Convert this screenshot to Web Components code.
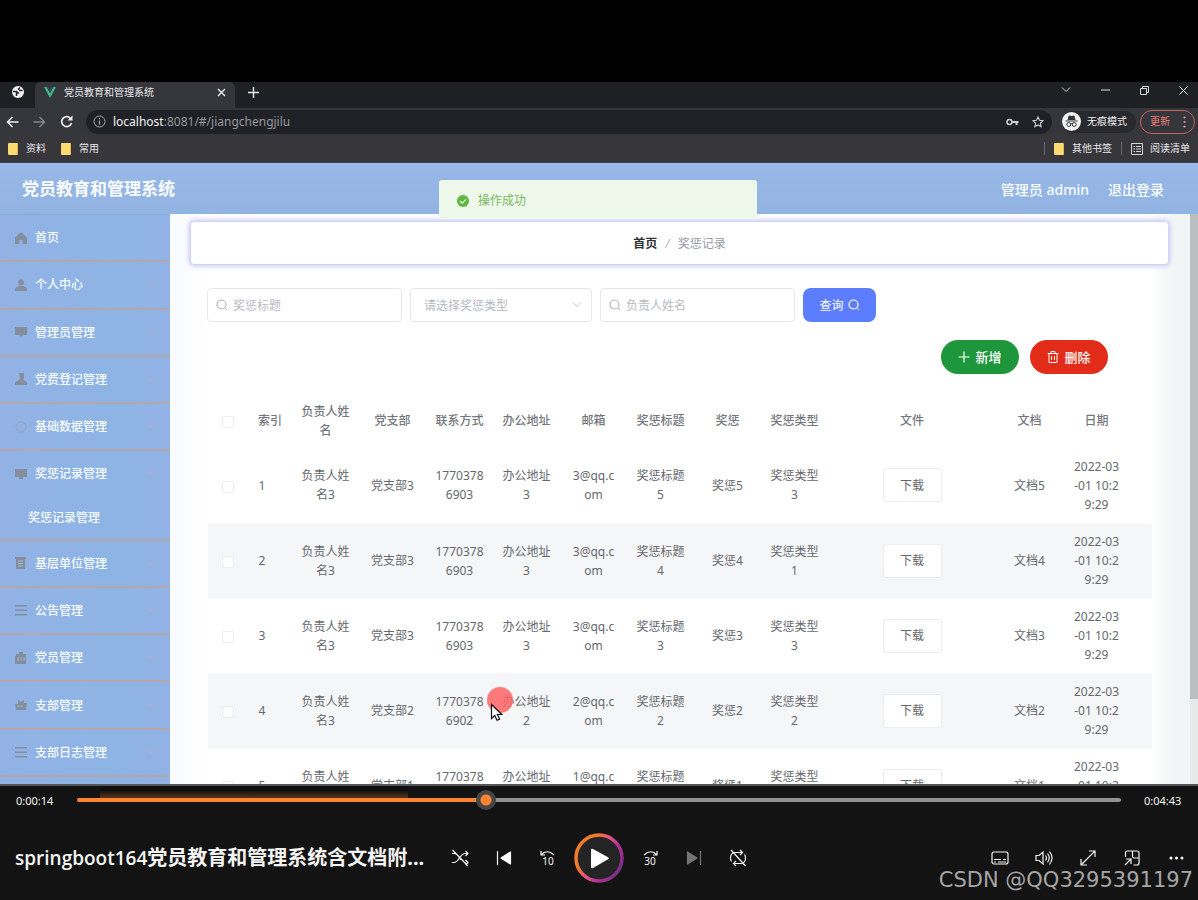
<!DOCTYPE html>
<html lang="zh-CN">
<head>
<meta charset="utf-8">
<title>党员教育和管理系统</title>
<style>
html,body{margin:0;height:100%}
body{background:#000;font:12px/19px "Noto Sans","Noto Sans CJK SC",sans-serif;color:#606266}
</style>
</head>
<body>
<media-stage></media-stage>
<script>
const define = (name, html, init) => customElements.define(name, class extends HTMLElement {
  constructor() {
    super();
    const t = document.createElement('template');
    t.innerHTML = '<style>*{box-sizing:border-box}svg{display:block;flex:none}button{font:inherit;border:0;background:none;padding:0;color:inherit}a{color:inherit;text-decoration:none}</style>' + html;
    this.attachShadow({mode: 'open'}).append(t.content.cloneNode(true));
  }
  connectedCallback() { if (init) init.call(this, this.shadowRoot); }
});

/* ---------- browser chrome ---------- */
define('tab-strip', `<style>
:host{display:flex;height:26px;background:#1e2024;color:#e8e8ea;font-size:10px;line-height:20px;align-items:stretch}
.pin{width:35px;display:flex;align-items:center;justify-content:center;padding-bottom:6px}
.tab{width:200px;background:#35363b;border-radius:6px 6px 0 0;display:flex;align-items:center;padding:0 9px 6px 9px;gap:8px}
.tab span{flex:1}
.plus{width:36px;display:flex;justify-content:center;align-items:center;padding-bottom:6px}
.win{margin-left:auto;display:flex;align-items:center;padding:0 2px 10px 0}
.win button{width:26px;display:flex;justify-content:center;margin-left:13px}
</style>
<div class="pin"><svg width="12" height="12" viewBox="0 0 12 12"><circle cx="6" cy="6" r="6" fill="#f2f2f2"/><path d="M1 5.500h3.500l1.500 1.500h-1.500v3M10.500 4.500H8L6.500 3 8 1.500" stroke="#24262a" stroke-width="1.500" fill="none"/></svg></div>
<div class="tab"><svg width="12" height="11" viewBox="0 0 12 11"><path d="M0 0h2.600L6 6 9.400 0H12L6 11z" fill="#41b883"/><path d="M2.600 0h2L6 2.500 7.400 0h2L6 6z" fill="#34495e"/></svg><span>党员教育和管理系统</span>
<button aria-label="关闭标签页"><svg width="9" height="9" viewBox="0 0 9 9"><path d="M1 1l7 7M8 1L1 8" stroke="#f2f2f2" stroke-width="1.400"/></svg></button></div>
<button class="plus" aria-label="新标签页"><svg width="11" height="11" viewBox="0 0 11 11"><path d="M5.500 0v11M0 5.500h11" stroke="#e8e8e8" stroke-width="1.400"/></svg></button>
<div class="win">
<button aria-label="搜索标签页"><svg width="10" height="6" viewBox="0 0 10 6"><path d="M1 .5l4 4 4-4" stroke="#ccc" fill="none"/></svg></button>
<button aria-label="最小化"><svg width="9" height="2"><path d="M0 1h9" stroke="#ddd"/></svg></button>
<button aria-label="还原"><svg width="9" height="9" viewBox="0 0 9 9"><path d="M.5 2.500h6v6h-6zM2.500 2.500v-2h6v6h-2" stroke="#ddd" fill="none"/></svg></button>
<button aria-label="关闭"><svg width="9" height="9" viewBox="0 0 9 9"><path d="M.5.5l8 8M8.500.5l-8 8" stroke="#eee"/></svg></button>
</div>`);

define('address-bar', `<style>
:host{display:flex;height:27px;background:#35363b;align-items:center;padding:0 3px 0 6px;color:#eee}
.nav{display:flex;gap:14px;width:80px;flex:none}
.url{flex:1;height:24px;border-radius:12px;background:#1f2126;display:flex;align-items:center;padding:0 8px 0 7px;gap:7px;margin-right:10px}
.host{color:#f2f2f2}
.path{color:#97989c}
.url a{flex:1}
.key{margin-right:6px}
.chip{display:flex;align-items:center;gap:6px;font-size:10px;background:#28292d;border-radius:12px;height:22px;padding-right:9px}
.update{margin-left:4px;height:24px;border:1px solid #c5655f;border-radius:12px;color:#ee8078;font-size:10px;width:55px;display:flex;align-items:center;justify-content:space-between;padding:0 8px 0 9px}
</style>
<div class="nav">
<button aria-label="后退"><svg width="13" height="12" viewBox="0 0 13 12"><path d="M12.500 6H1.500M6.500 1L1.500 6l5 5" stroke="#f0f0f0" stroke-width="1.500" fill="none"/></svg></button>
<button aria-label="前进"><svg width="13" height="12" viewBox="0 0 13 12"><path d="M.5 6h11M6.500 1l5 5-5 5" stroke="#85868a" stroke-width="1.500" fill="none"/></svg></button>
<button aria-label="刷新"><svg width="13" height="13" viewBox="0 0 13 13"><path d="M11 4A5 5 0 1 0 11.500 8" stroke="#f0f0f0" stroke-width="1.700" fill="none"/><path d="M12.500.5v5h-5z" fill="#f0f0f0"/></svg></button></div>
<div class="url"><svg width="13" height="13" viewBox="0 0 13 13"><circle cx="6.500" cy="6.500" r="5.500" stroke="#aaa" fill="none"/><path d="M6.500 5.500v4M6.500 3v1.300" stroke="#aaa" stroke-width="1.200"/></svg>
<a href="#/jiangchengjilu"><span class="host">localhost</span><span class="path">:8081/#/jiangchengjilu</span></a>
<svg class="key" width="13" height="8" viewBox="0 0 13 8"><circle cx="3.500" cy="4" r="2.500" stroke="#d0d0d0" stroke-width="1.500" fill="none"/><path d="M6 4h6.500M10.500 4v3" stroke="#d0d0d0" stroke-width="2"/></svg>
<svg width="12" height="12" viewBox="0 0 12 12"><path d="M6 1l1.500 3.300 3.500.4-2.600 2.400.7 3.500L6 8.900l-3.100 1.700.7-3.500L1 4.700l3.500-.4z" stroke="#d0d0d0" fill="none" stroke-width="1.100"/></svg></div>
<div class="chip"><svg width="19" height="19" viewBox="0 0 19 19"><circle cx="9.500" cy="9.500" r="9.500" fill="#f3f3f3"/><path d="M6.500 4l1-.5 2 .5 2-.5 1 .5 1 4h-8zM3.500 8.500h12v1h-12z" fill="#33353a"/><circle cx="6.800" cy="12.500" r="2" fill="none" stroke="#33353a"/><circle cx="12.200" cy="12.500" r="2" fill="none" stroke="#33353a"/><path d="M8.500 12q1-.8 2 0" stroke="#33353a" fill="none"/></svg>无痕模式</div>
<button class="update">更新<svg width="3" height="12" viewBox="0 0 3 12" fill="#d99"><circle cx="1.500" cy="1.500" r="1.100"/><circle cx="1.500" cy="6" r="1.100"/><circle cx="1.500" cy="10.500" r="1.100"/></svg></button>`);

define('bookmarks-bar', `<style>
:host{display:flex;height:28px;background:#36363b;color:#e6e6e8;font-size:10px;align-items:center;padding:0 8px;border-bottom:1px solid #3c4252}
a{display:flex;align-items:center;gap:8px;margin-right:15px}
i{width:10px;height:12px;background:#fbdc72;border-radius:1px;border-right:1px solid #e5b94c}
b{width:1px;height:13px;background:#67686c;margin-right:9px}
.right{margin-left:auto;display:flex;align-items:center}
.right a{margin-right:9px}.right a:last-child{margin-right:0;gap:7px}
</style>
<a href="#z"><i></i>资料</a><a href="#c"><i></i>常用</a>
<div class="right"><b></b><a href="#q"><i></i>其他书签</a><b></b><a href="#y"><svg width="12" height="12" viewBox="0 0 12 12"><path d="M.5.5h11v11H.5zM5 3.500h5M5 6h5M5 8.500h5M2.500 3.500h1.500M2.500 6h1.500M2.500 8.500h1.500" stroke="#d5d5d5" fill="none"/></svg>阅读清单</a></div>`);

/* ---------- admin application ---------- */
define('app-header', `<style>
:host{display:flex;height:51px;flex:none;background:linear-gradient(#98b8e6,#92b4e3);color:#f8fcff;align-items:center;justify-content:space-between;padding:1px 34px 0 22px}
h1{margin:0;font-size:17px;line-height:24px;font-weight:700}
div{display:flex;gap:19px;font-size:14px;font-weight:500}
</style><h1>党员教育和管理系统</h1><div><span>管理员 admin</span><a href="#/login">退出登录</a></div>`);

const navIcons = {
  home:'<path d="M6 0L0 5.500V12h4.500V8h3v4H12V5.500z"/>',
  user:'<circle cx="6" cy="3.500" r="3"/><path d="M0 12V9.500Q1 7.500 4 7h4q3 .5 4 2.500V12z"/>',
  chat:'<path d="M0 1h12v8H8l-2 2-1-2H0z"/>',
  person:'<path d="M4 0h5v5L8 7l4 2v3H0V9l4-2 1-2z"/>',
  dial:'<circle cx="6" cy="6" r="5" fill="none" stroke="#9298a5" stroke-dasharray="4 1" opacity=".6"/><path d="M6 3v4" stroke="#9298a5" opacity=".5"/>',
  screen:'<path d="M0 1h12v8H8v2H4V9H0z"/>',
  doc:'<path d="M0 0h11v2h-1v10H1V2H0z"/><path d="M3 4h5M3 6.500h5M3 9h5" stroke="#a9bdd8"/>',
  list:'<path d="M0 1h12v1.500H0zM0 5.500h12V7H0zM0 10h12v1.500H0z"/>',
  grid:'<path d="M1 2h3V0h4v2h3v10H0V4h1z"/><path d="M3 5v4M6 5v4M9 5v4" stroke="#9bb2d4"/>',
  bag:'<path d="M3 1l3 2 3-2v3h3l-1 7H1L0 5h3z"/><path d="M2 7h6" stroke="#9bb2d4"/>'
};
define('nav-item', `<style>
:host{display:flex;flex-direction:column;flex:1 0 auto;min-height:47px;border-bottom:2px solid #b5a8ab;color:#f5fbff;font-weight:500}
a{display:flex;align-items:center;height:45px;flex:1 0 auto;padding:0 15px;gap:8px}
.text{flex:1}
</style>
<a href="#"><svg class="icon" width="12" height="12" viewBox="0 0 12 12" fill="#858e9d"></svg><span class="text"></span><svg class="arrow" width="9" height="5" viewBox="0 0 9 5"><path d="M2 1l2.500 2L7 1" stroke="#d0a3c8" fill="none"/></svg></a><slot></slot>`,
function (r) {
  r.querySelector('.icon').innerHTML = navIcons[this.getAttribute('icon')];
  r.querySelector('.text').textContent = this.getAttribute('label');
  if (this.getAttribute('icon') === 'home') r.querySelector('.arrow').remove();
});
define('side-nav', `<style>
:host{display:block;background:linear-gradient(90deg,#92b2e5,#8db4e4 70%,#92b2e4);border-top:1px solid #8aacdc;overflow:hidden}
nav{display:flex;flex-direction:column;height:100%;padding-bottom:7px}
.sub{display:block;height:42px;padding:11px 28px 0;color:#f5fbff}
</style><nav>
<nav-item icon="home" label="首页"></nav-item>
<nav-item icon="user" label="个人中心"></nav-item>
<nav-item icon="chat" label="管理员管理"></nav-item>
<nav-item icon="person" label="党费登记管理"></nav-item>
<nav-item icon="dial" label="基础数据管理"></nav-item>
<nav-item icon="screen" label="奖惩记录管理"><a class="sub" href="#/jiangchengjilu">奖惩记录管理</a></nav-item>
<nav-item icon="doc" label="基层单位管理"></nav-item>
<nav-item icon="list" label="公告管理"></nav-item>
<nav-item icon="grid" label="党员管理"></nav-item>
<nav-item icon="bag" label="支部管理"></nav-item>
<nav-item icon="list" label="支部日志管理"></nav-item>
</nav>`);

define('bread-crumb', `<style>
:host{display:flex;align-items:center;justify-content:center;height:44px;background:#fff;border:1px solid #d4d3f5;border-radius:4px;box-shadow:0 0 5px 1px #c5c3f4;gap:8px;color:#969aa5}
a{color:#303133;font-weight:700}i{color:#b4b8c0}
</style><a href="#/">首页</a><i>/</i><span>奖惩记录</span>`);

const lens = c => `<svg width="12" height="12" viewBox="0 0 12 12"><circle cx="5.500" cy="5.500" r="4.500" stroke="${c}" fill="none" stroke-width="1.200"/><path d="M9 9l2 2" stroke="${c}"/></svg>`;
define('search-bar', `<style>
:host{display:flex;gap:8px;height:34px}
label{display:flex;align-items:center;border:1px solid #e8e8ec;border-radius:4px;background:#fff;width:195px;padding:0 8px;gap:5px}
input,select{appearance:none;border:0;background:none;outline:0;padding:0;font:inherit;color:#b5b8c2;min-width:0;flex:1}
input::placeholder{color:#b8bac4;opacity:1}
.pick{width:182px;padding:0 9px 0 13px}
button{width:73px;border-radius:8px;background:#5d7dff;color:#fff;display:flex;align-items:center;justify-content:center;gap:4px}
</style>
<label>${lens('#b5b9c2')}<input aria-label="奖惩标题" placeholder="奖惩标题"></label>
<label class="pick"><select aria-label="奖惩类型"><option>请选择奖惩类型</option></select><svg width="10" height="6" viewBox="0 0 10 6"><path d="M1 .5l4 4 4-4" stroke="#c0c4cc" fill="none"/></svg></label>
<label>${lens('#b5b9c2')}<input aria-label="负责人姓名" placeholder="负责人姓名"></label>
<button>查询${lens('#fff')}</button>`);

define('action-bar', `<style>
:host{display:flex;justify-content:flex-end;gap:11px;padding-right:44px;height:34px}
button{width:78px;border-radius:17px;color:#fff;font-size:13px;font-weight:500;display:flex;align-items:center;justify-content:center;gap:5px;background:#1d963c}
.del{background:#e22b18}
</style>
<button><svg width="12" height="12" viewBox="0 0 12 12"><path d="M6 .5v11M.5 6h11" stroke="#fff" stroke-width="1.200"/></svg>新增</button>
<button class="del"><svg width="12" height="12" viewBox="0 0 12 12"><path d="M.5 2.500h11M4 2.500v-2h4v2M2 2.500v9h8v-9M4.500 5v4M7.500 5v4" stroke="#fff" fill="none"/></svg>删除</button>`);

define('record-table', `<style>
:host{display:block}
table{width:100%;table-layout:fixed;border-collapse:collapse;text-align:center;color:#66686d}
th{font-weight:500;height:55px;color:#75777e}
td{height:75px}
th,td{padding:0 9px;word-break:break-all}
tbody tr:nth-child(even){background:#f5f6f7}
tbody tr td{border-bottom:1px solid #fafafb}
th:nth-child(-n+2),td:nth-child(-n+2){padding-left:0;padding-right:0}
td:nth-child(2){padding-right:16px}
input{appearance:none;width:12px;height:12px;border:1px solid #ededf1;border-radius:2px;background:#fff;margin:0;vertical-align:middle}
button{width:59px;height:34px;border:1px solid #ececf0;border-radius:3px;background:#fff}
</style><table><colgroup></colgroup><thead><tr></tr></thead><tbody></tbody></table>`,
function (r) {
  const widths = [40,44,67,67,67,67,67,67,67,67,168,67,67,22];
  r.querySelector('colgroup').innerHTML = widths.map(w => `<col style="width:${w}px">`).join('');
  r.querySelector('thead tr').innerHTML = '<th><input type="checkbox" aria-label="全选"></th>' +
    ['索引','负责人姓名','党支部','联系方式','办公地址','邮箱','奖惩标题','奖惩','奖惩类型','文件','文档','日期',''].map(t => `<th>${t}</th>`).join('');
  const rows = [[1,3,3,5,3],[2,3,3,4,1],[3,3,3,3,3],[4,3,2,2,2],[5,1,1,1,1]];
  r.querySelector('tbody').innerHTML = rows.map(([i,name,n,k,type]) => '<tr>' + [
    `<input type="checkbox" aria-label="选择第${i}行">`, i, '负责人姓名'+name, '党支部'+n, '1770378690'+n, '办公地址'+n, n+'@qq.c<br>om',
    '奖惩标题'+k, '奖惩'+k, '奖惩类型'+type, '<button>下载</button>', '文档'+k, '2022-03<br>-01 10:2<br>9:29', ''
  ].map(c => `<td>${c}</td>`).join('') + '</tr>').join('');
});

define('toast-message', `<style>
:host{display:flex;align-items:center;gap:9px;background:#eef8ea;color:#7bb95f;border-radius:3px;padding:2px 18px 0;height:39px;box-sizing:border-box}
</style><svg width="12" height="12" viewBox="0 0 12 12"><circle cx="6" cy="6" r="6" fill="#5bb83c"/><path d="M3 6l2.300 2.200L9 4.300" stroke="#fff" stroke-width="1.200" fill="none"/></svg><slot></slot>`);

define('click-pointer', `<style>:host{display:block;width:26px;height:34px}svg{overflow:visible}</style>
<svg width="26" height="34" viewBox="0 0 26 34"><circle cx="13" cy="13" r="13" fill="#ff6464" fill-opacity=".85"/><path d="M4.500 17.500v14l3.200-3 2.300 4.800 2.600-1.200-2.200-4.600h4.400z" fill="#fff" stroke="#111" stroke-width="1.200"/></svg>`);

define('browser-window', `<style>
:host{display:flex;flex-direction:column;position:relative;overflow:hidden;background:#fff}
.body{flex:1;min-height:0;display:grid;grid-template-columns:170px minmax(0,1fr) 8px}
main{padding:7px 21px 0 20px;background:linear-gradient(90deg,#f8fafe,#fff 40px,#fff calc(100% - 40px),#f1f5f5 calc(100% - 12px));overflow:hidden}
search-bar{margin:23px 17px 18px}
action-bar{margin:0 17px 19px}
record-table{margin:0 17px 0 18px}
.scroll{background:#e6ebea}
.scroll i{display:block;height:85%;background:#b9bfbe}
toast-message{position:absolute;top:98px;left:50%;width:318px;margin-left:-160px}
click-pointer{position:absolute;left:487px;top:605px}
</style>
<tab-strip></tab-strip><address-bar></address-bar><bookmarks-bar></bookmarks-bar><app-header></app-header>
<div class="body"><side-nav></side-nav>
<main><bread-crumb></bread-crumb><search-bar></search-bar><action-bar></action-bar><record-table></record-table></main>
<div class="scroll"><i></i></div></div>
<toast-message>操作成功</toast-message><click-pointer></click-pointer>`);

/* ---------- media player ---------- */
const ic = (label, body) => `<button aria-label="${label}"><svg width="18" height="18" viewBox="0 0 18 18" fill="none" stroke="#f4f4f4" stroke-width="1.200">${body}</svg></button>`;
define('media-player', `<style>
:host{display:block;background:#131313;border-top:2px solid #54575a;color:#f4f4f4;position:relative}
.seek{display:flex;height:28px;align-items:center;font-size:11px;padding:0 16px;background:linear-gradient(#100f0f 30%,#6b3d22) 100px 0/308px 14px no-repeat}
.seek span{width:38px;flex:none}
.seek input{flex:1;min-width:0;appearance:none;background:none;margin:0 23px;height:20px}
input::-webkit-slider-runnable-track{height:4px;border-radius:2px;background:linear-gradient(90deg,#ff8431 39%,#929292 39%)}
input::-webkit-slider-thumb{appearance:none;width:20px;height:20px;margin-top:-8px;border-radius:50%;background:radial-gradient(circle,#ff8431 0 5px,#464646 6px)}
.row{display:grid;grid-template-columns:minmax(0,1fr) auto minmax(0,1fr);align-items:center;height:86px;padding:2px 0 0}
h2{margin:0;font-size:20px;line-height:30px;font-weight:700;padding-left:15px;white-space:nowrap}
h2 span{font-family:"Open Sans";font-weight:600;font-size:19px}
.group{display:flex;gap:8px;align-items:center}
.right{justify-content:flex-end;padding-right:4px}
button{width:36px;height:36px;display:flex;align-items:center;justify-content:center}
.play{width:50px;height:50px}
.mark{position:absolute;right:5px;bottom:6px;font:21px/28px "DejaVu Sans",sans-serif;color:#a5a5a5}
</style>
<div class="seek"><span>0:00:14</span><input type="range" aria-label="播放进度" value="39"><span>0:04:43</span></div>
<div class="row"><h2><span>springboot164</span>党员教育和管理系统含文档附...</h2>
<div class="group">
${ic('随机播放','<path d="M1 13.500h2C8 13.500 9 4.500 14 4.500h3M1 4.500h2c3.500 0 5 4 7 6.500M14.500 2L17 4.500 14.500 7M14.500 11l2.500 2.500-2.500 2.500M1.500 1l15.500 16"/>')}
${ic('上一个','<path d="M2.500 2v14"/><path d="M15.500 3v12L6 9z" fill="#fff" stroke="#fff" stroke-linejoin="round"/>')}
${ic('后退10秒','<path d="M2 2v4h4M2 6q6-6.500 13 0"/><text x="9" y="16" font-size="10" text-anchor="middle" fill="#f4f4f4" stroke="none">10</text>')}
<button class="play" aria-label="播放"><svg width="50" height="50" viewBox="0 0 50 50"><defs><linearGradient id="g" x1="0" y1=".2" x2="1" y2=".8"><stop offset=".25" stop-color="#f27a2a"/><stop offset=".5" stop-color="#e0508a"/><stop offset=".7" stop-color="#b02f94"/><stop offset="1" stop-color="#6d2f88"/></linearGradient></defs><circle cx="25" cy="25" r="23" fill="#242424" stroke="url(#g)" stroke-width="3.500"/><path d="M17 17v17q0 2 2 1l15.500-9q1-.8 0-1.500L19 16q-2-1-2 1z" fill="#fff"/></svg></button>
${ic('前进30秒','<path d="M16 2v4h-4M16 6q-6-6.500-13 0"/><text x="9" y="16" font-size="10" text-anchor="middle" fill="#f4f4f4" stroke="none">30</text>')}
${ic('下一个','<path d="M15.500 2v14" stroke="#747474"/><path d="M2.500 3v12L12 9z" fill="#747474" stroke="#747474" stroke-linejoin="round"/>')}
${ic('循环','<path d="M11 1l2.500 2.500L11 6M13.500 3.500H6Q1.500 4 1.500 9q0 2 1 3.500M7 12l-2.500 2.500L7 17M4.500 14.500H12q4.500-.5 4.500-5.500 0-2-1-3.500M2 1l14.500 16"/>')}
</div>
<div class="group right">
${ic('字幕','<rect x="1" y="3" width="16" height="12" rx="2"/><path d="M3 10.500h7M12 10.500h3M3 13h2M7 13h8"/>')}
${ic('音量','<path d="M1 6.500h3L8 3v12l-4-3.500H1zM10.500 6.500q2 2.500 0 5M12.500 4.500q3.500 4.500 0 9M14.500 2.500q5 6.500 0 13"/>')}
${ic('全屏','<path d="M2 10v6h6M2 16L16 2M10 2h6v6"/>')}
${ic('迷你视图','<path d="M2.500 8V4q0-2 2-2h9.500q2 0 2 2v10q0 2-2 2h-3.500M9.500 2v5.500q0 1.500 1.500 1.500h5M2 16l6-6M3 10h5v5"/>')}
${ic('更多','<g fill="#fff" stroke="none"><circle cx="4" cy="9" r="1.500"/><circle cx="9.500" cy="9" r="1.500"/><circle cx="15" cy="9" r="1.500"/></g>')}
</div></div>
<div class="mark">CSDN @QQ3295391197</div>`);

define('media-stage', `<style>
:host{display:flex;flex-direction:column;height:100vh;padding-top:82px;background:#000;box-sizing:border-box}
browser-window{flex:1;min-height:0}
media-player{flex:none}
</style><browser-window></browser-window><media-player></media-player>`);
</script>
</body>
</html>
